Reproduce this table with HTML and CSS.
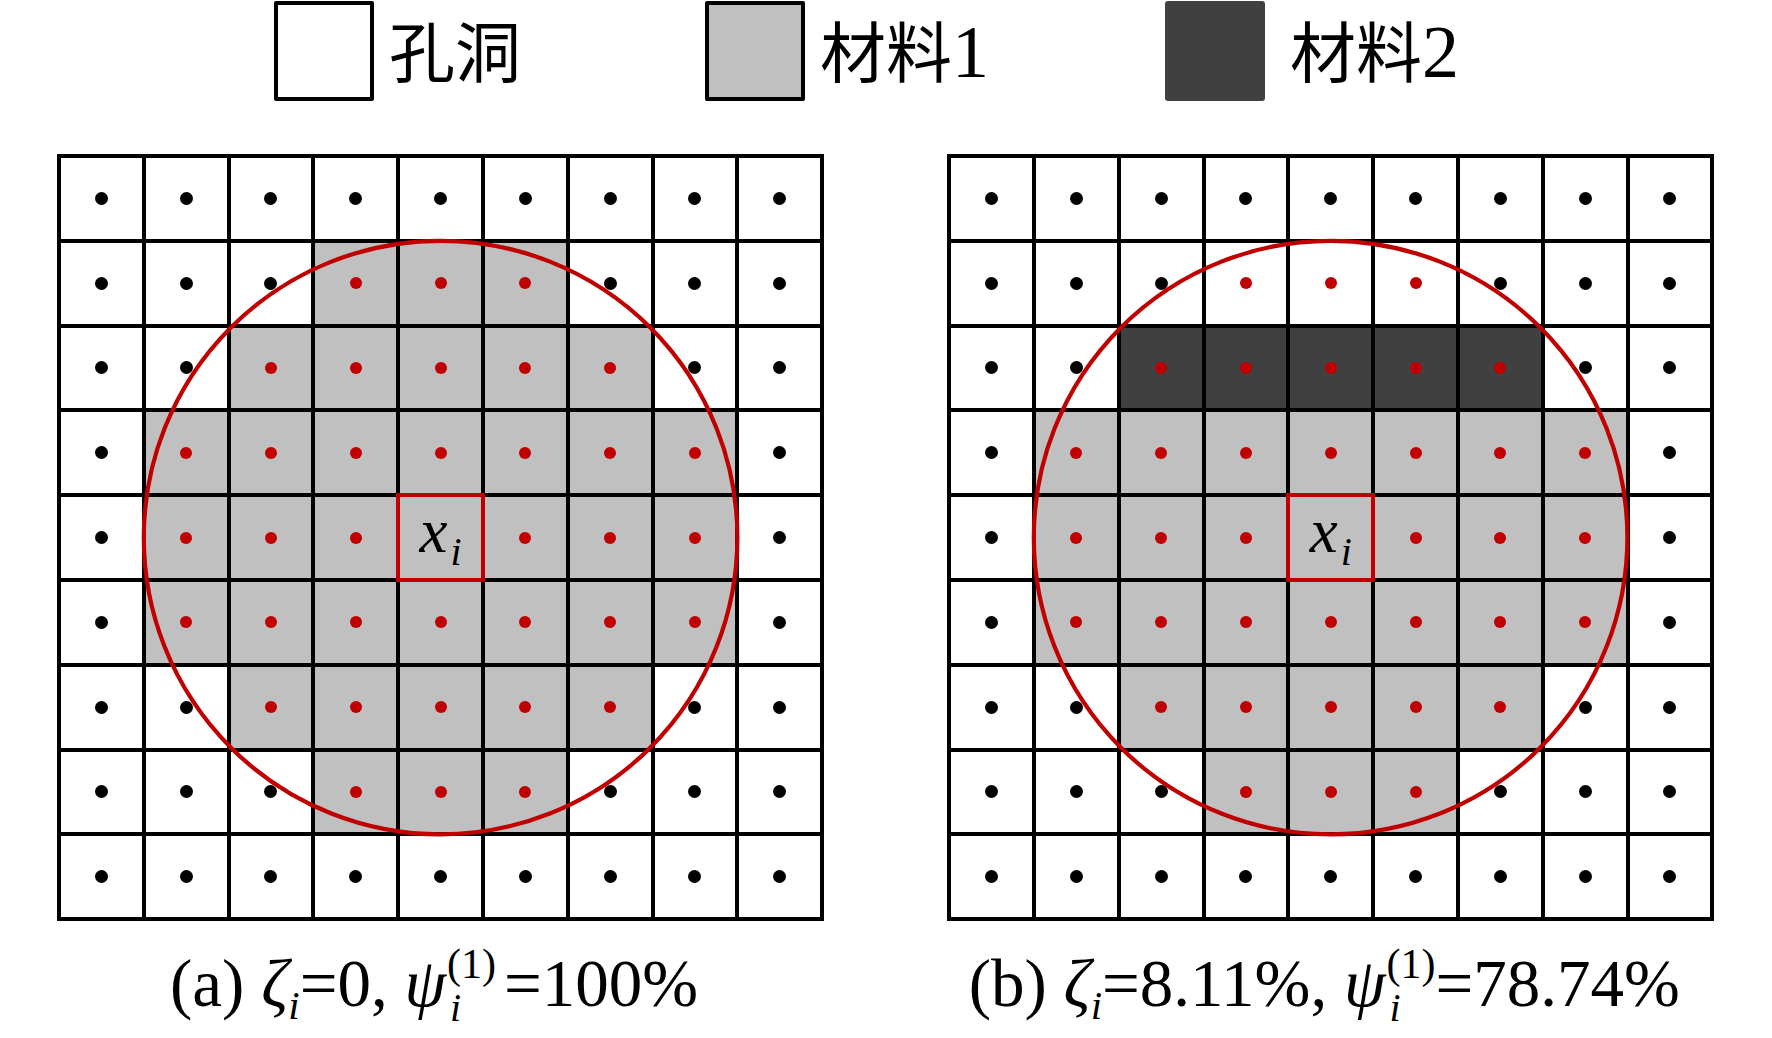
FILE: index.html
```html
<!DOCTYPE html>
<html lang="zh">
<head>
<meta charset="utf-8">
<title>孔洞 材料1 材料2</title>
<link rel="stylesheet" href="styles.css">
</head>
<body>
<div class="legend">
  <div class="item item-1"><div class="sw sw-hole"></div><span class="lbl">孔洞</span></div>
  <div class="item item-2"><div class="sw sw-m1"></div><span class="lbl">材料<span class="num">1</span></span></div>
  <div class="item item-3"><div class="sw sw-m2"></div><span class="lbl">材料<span class="num">2</span></span></div>
</div>

<div class="figs">
  <div class="panel">
    <div class="grid">
      <div class="c"></div><div class="c"></div><div class="c"></div><div class="c"></div><div class="c"></div><div class="c"></div><div class="c"></div><div class="c"></div><div class="c"></div>
      <div class="c"></div><div class="c"></div><div class="c"></div><div class="c g r"></div><div class="c g r"></div><div class="c g r"></div><div class="c"></div><div class="c"></div><div class="c"></div>
      <div class="c"></div><div class="c"></div><div class="c g r"></div><div class="c g r"></div><div class="c g r"></div><div class="c g r"></div><div class="c g r"></div><div class="c"></div><div class="c"></div>
      <div class="c"></div><div class="c g r"></div><div class="c g r"></div><div class="c g r"></div><div class="c g r"></div><div class="c g r"></div><div class="c g r"></div><div class="c g r"></div><div class="c"></div>
      <div class="c"></div><div class="c g r"></div><div class="c g r"></div><div class="c g r"></div><div class="c g ctr"><span class="xi">x<span class="xsub">i</span></span></div><div class="c g r"></div><div class="c g r"></div><div class="c g r"></div><div class="c"></div>
      <div class="c"></div><div class="c g r"></div><div class="c g r"></div><div class="c g r"></div><div class="c g r"></div><div class="c g r"></div><div class="c g r"></div><div class="c g r"></div><div class="c"></div>
      <div class="c"></div><div class="c"></div><div class="c g r"></div><div class="c g r"></div><div class="c g r"></div><div class="c g r"></div><div class="c g r"></div><div class="c"></div><div class="c"></div>
      <div class="c"></div><div class="c"></div><div class="c"></div><div class="c g r"></div><div class="c g r"></div><div class="c g r"></div><div class="c"></div><div class="c"></div><div class="c"></div>
      <div class="c"></div><div class="c"></div><div class="c"></div><div class="c"></div><div class="c"></div><div class="c"></div><div class="c"></div><div class="c"></div><div class="c"></div>
      <svg class="ring" viewBox="0 0 767.2 767.2" aria-hidden="true"><circle cx="383.6" cy="383.6" r="296.8"/></svg>
    </div>
    <p class="cap">(a) <i>ζ</i><span class="sb">i</span>=0, <i>ψ</i><span class="ss ss-gap"><span class="sp">(1)</span><span class="sb2">i</span></span>=100%</p>
  </div>

  <div class="panel">
    <div class="grid">
      <div class="c"></div><div class="c"></div><div class="c"></div><div class="c"></div><div class="c"></div><div class="c"></div><div class="c"></div><div class="c"></div><div class="c"></div>
      <div class="c"></div><div class="c"></div><div class="c"></div><div class="c r"></div><div class="c r"></div><div class="c r"></div><div class="c"></div><div class="c"></div><div class="c"></div>
      <div class="c"></div><div class="c"></div><div class="c d r"></div><div class="c d r"></div><div class="c d r"></div><div class="c d r"></div><div class="c d r"></div><div class="c"></div><div class="c"></div>
      <div class="c"></div><div class="c g r"></div><div class="c g r"></div><div class="c g r"></div><div class="c g r"></div><div class="c g r"></div><div class="c g r"></div><div class="c g r"></div><div class="c"></div>
      <div class="c"></div><div class="c g r"></div><div class="c g r"></div><div class="c g r"></div><div class="c g ctr"><span class="xi">x<span class="xsub">i</span></span></div><div class="c g r"></div><div class="c g r"></div><div class="c g r"></div><div class="c"></div>
      <div class="c"></div><div class="c g r"></div><div class="c g r"></div><div class="c g r"></div><div class="c g r"></div><div class="c g r"></div><div class="c g r"></div><div class="c g r"></div><div class="c"></div>
      <div class="c"></div><div class="c"></div><div class="c g r"></div><div class="c g r"></div><div class="c g r"></div><div class="c g r"></div><div class="c g r"></div><div class="c"></div><div class="c"></div>
      <div class="c"></div><div class="c"></div><div class="c"></div><div class="c g r"></div><div class="c g r"></div><div class="c g r"></div><div class="c"></div><div class="c"></div><div class="c"></div>
      <div class="c"></div><div class="c"></div><div class="c"></div><div class="c"></div><div class="c"></div><div class="c"></div><div class="c"></div><div class="c"></div><div class="c"></div>
      <svg class="ring" viewBox="0 0 767.2 767.2" aria-hidden="true"><circle cx="383.6" cy="383.6" r="296.8"/></svg>
    </div>
    <p class="cap">(b) <i>ζ</i><span class="sb">i</span>=8.11%, <i>ψ</i><span class="ss"><span class="sp">(1)</span><span class="sb2">i</span></span>=78.74%</p>
  </div>
</div>
</body>
</html>
```

FILE: styles.css
```css
html, body {
  margin: 0;
  padding: 0;
  background: #ffffff;
}

body {
  width: 1772px;
  height: 1038px;
  overflow: hidden;
  font-family: "Liberation Serif", "Noto Sans CJK SC", serif;
  color: #000000;
}

/* ---------- legend ---------- */
.legend {
  display: flex;
  align-items: flex-start;
  padding-left: 274px;
  height: 101px;
}

.item {
  display: flex;
  align-items: flex-start;
}

.item-1 { width: 431px; gap: 15px; }
.item-2 { width: 460px; gap: 15px; }
.item-3 { gap: 25px; }

.sw {
  box-sizing: border-box;
  width: 100px;
  height: 100px;
  margin-top: 1px;
  border-radius: 2px;
}

.sw-hole {
  background: #ffffff;
  border: 4px solid #000000;
}

.sw-m1 {
  background: #c0c0c0;
  border: 4px solid #000000;
}

.sw-m2 {
  background: #404040;
  border-radius: 3px;
}

.lbl {
  font-size: 66px;
  line-height: 66px;
  margin-top: 22px;
  white-space: nowrap;
}

.num {
  font-size: 74px;
  line-height: 0;
}

/* ---------- figures ---------- */
.figs {
  display: flex;
  gap: 123px;
  padding-left: 57px;
  margin-top: 53px;
}

.panel {
  display: flex;
  flex-direction: column;
  align-items: center;
  width: 767.2px;
}

.grid {
  position: relative;
  display: grid;
  grid-template-columns: repeat(9, 80.8px);
  grid-auto-rows: 80.8px;
  gap: 4px;
  padding: 4px;
  background: #000000;
}

.c {
  display: flex;
  align-items: center;
  justify-content: center;
  background: #ffffff;
}

.c::after {
  content: "";
  width: 13px;
  height: 13px;
  border-radius: 50%;
  background: #000000;
}

.c.r::after {
  width: 12px;
  height: 12px;
  background: #c00000;
}

.c.g { background: #c0c0c0; }
.c.d { background: #404040; }

.c.ctr {
  outline: 4px solid #c00000;
  outline-offset: 0;
}

.c.ctr::after {
  content: none;
}

.xi {
  font-style: italic;
  font-size: 63px;
  line-height: 63px;
  margin-bottom: 13px;
  white-space: nowrap;
}

.xsub {
  font-size: 40px;
  line-height: 0;
  vertical-align: -13px;
  margin-left: 3px;
}

.ring {
  position: absolute;
  left: 0;
  top: 0;
  width: 767.2px;
  height: 767.2px;
  pointer-events: none;
}

.ring circle {
  fill: none;
  stroke: #c00000;
  stroke-width: 4.2px;
}

/* ---------- captions ---------- */
.cap {
  margin: 28px 13px 0 0;
  font-size: 67px;
  line-height: 67px;
  white-space: nowrap;
}

.cap i {
  font-style: italic;
}

.sb {
  font-style: italic;
  font-size: 41px;
  line-height: 0;
  vertical-align: -13px;
}

.ss {
  display: inline-flex;
  flex-direction: column;
  align-items: flex-start;
  vertical-align: 28px;
  margin-left: 1px;
}

.ss .sp {
  font-size: 42px;
  line-height: 30px;
}

.ss .sb2 {
  font-style: italic;
  font-size: 40px;
  line-height: 26px;
  margin-top: 16px;
  margin-left: 3px;
}

.ss-gap {
  margin-right: 8px;
}
```
